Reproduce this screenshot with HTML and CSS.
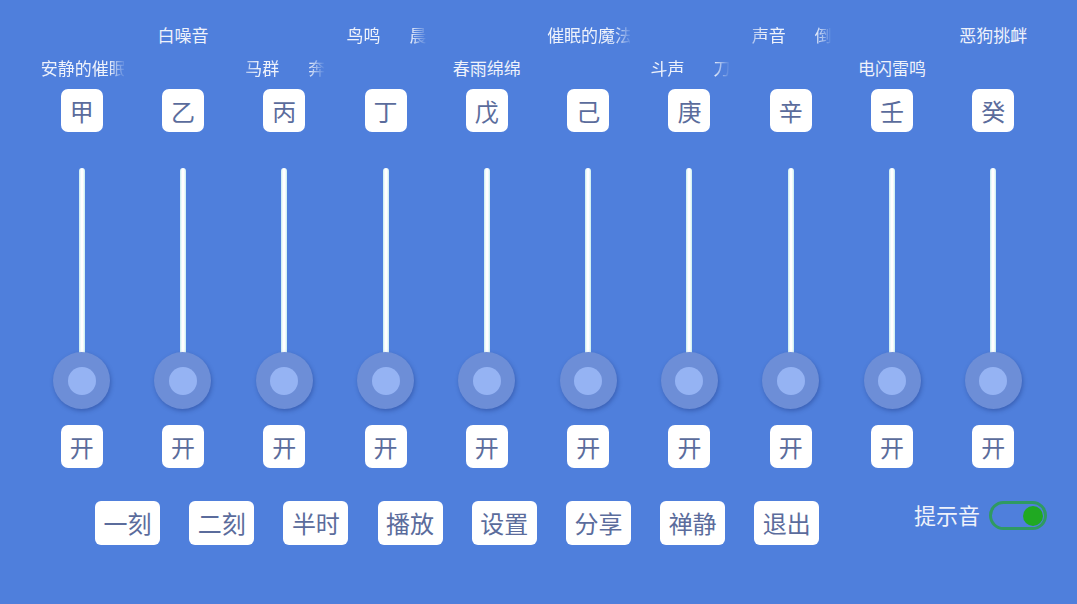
FILE: index.html
```html
<!DOCTYPE html>
<html lang="zh-CN">
<head>
	<meta charset="UTF-8">
	<title>白噪音混音台</title>
	<link rel="stylesheet" href="styles.css">
</head>
<body>
	<div class="panel">
		<div class="channel low">
			<div class="label"><span class="scroll">安静的催眠</span></div>
			<div class="key">甲</div>
			<div class="slider"><div class="track"></div><div class="knob"><i></i></div></div>
			<div class="key switch-key">开</div>
		</div>
		<div class="channel high">
			<div class="label center"><span>白噪音</span></div>
			<div class="key">乙</div>
			<div class="slider"><div class="track"></div><div class="knob"><i></i></div></div>
			<div class="key switch-key">开</div>
		</div>
		<div class="channel low">
			<div class="label"><span class="scroll fade-l">马群<b class="gap"></b>奔</span></div>
			<div class="key">丙</div>
			<div class="slider"><div class="track"></div><div class="knob"><i></i></div></div>
			<div class="key switch-key">开</div>
		</div>
		<div class="channel high">
			<div class="label"><span class="scroll shift">鸟鸣<b class="gap"></b>晨</span></div>
			<div class="key">丁</div>
			<div class="slider"><div class="track"></div><div class="knob"><i></i></div></div>
			<div class="key switch-key">开</div>
		</div>
		<div class="channel low">
			<div class="label center"><span>春雨绵绵</span></div>
			<div class="key">戊</div>
			<div class="slider"><div class="track"></div><div class="knob"><i></i></div></div>
			<div class="key switch-key">开</div>
		</div>
		<div class="channel high">
			<div class="label"><span class="scroll">催眠的魔法</span></div>
			<div class="key">己</div>
			<div class="slider"><div class="track"></div><div class="knob"><i></i></div></div>
			<div class="key switch-key">开</div>
		</div>
		<div class="channel low">
			<div class="label"><span class="scroll shift">斗声<b class="gap"></b>刀</span></div>
			<div class="key">庚</div>
			<div class="slider"><div class="track"></div><div class="knob"><i></i></div></div>
			<div class="key switch-key">开</div>
		</div>
		<div class="channel high">
			<div class="label"><span class="scroll fade-l">声音<b class="gap"></b>倒</span></div>
			<div class="key">辛</div>
			<div class="slider"><div class="track"></div><div class="knob"><i></i></div></div>
			<div class="key switch-key">开</div>
		</div>
		<div class="channel low">
			<div class="label center"><span>电闪雷鸣</span></div>
			<div class="key">壬</div>
			<div class="slider"><div class="track"></div><div class="knob"><i></i></div></div>
			<div class="key switch-key">开</div>
		</div>
		<div class="channel high">
			<div class="label center"><span>恶狗挑衅</span></div>
			<div class="key">癸</div>
			<div class="slider"><div class="track"></div><div class="knob"><i></i></div></div>
			<div class="key switch-key">开</div>
		</div>
	</div>

	<div class="toolbar">
		<button class="tool">一刻</button>
		<button class="tool">二刻</button>
		<button class="tool">半时</button>
		<button class="tool">播放</button>
		<button class="tool">设置</button>
		<button class="tool">分享</button>
		<button class="tool">禅静</button>
		<button class="tool">退出</button>
		<div class="hint">
			<span>提示音</span>
			<div class="toggle"><i></i></div>
		</div>
	</div>
</body>
</html>
```

FILE: styles.css
```css
html,body,div,span,button,b,i{
	padding: 0;
	margin: 0;
	border: 0;
}
body{
	width: 1077px;
	height: 604px;
	overflow: hidden;
	background-color: #4f7fdc;
	font-family: "Noto Sans CJK SC", "Noto Sans", sans-serif;
}
button:focus{
	outline: none;
}
.panel{
	display: flex;
	padding-left: 31px;
}
.channel{
	width: 101.3px;
	display: flex;
	flex-direction: column;
	align-items: center;
}
.label{
	width: 84px;
	height: 24px;
	overflow: hidden;
	white-space: nowrap;
	font-size: 17px;
	line-height: 24px;
	color: #eef2fb;
}
.label.center{
	text-align: center;
}
.label .scroll{
	display: inline-block;
	padding-left: 1px;
	-webkit-mask-image: linear-gradient(to right, #000 0, #000 80%, transparent 100%);
	mask-image: linear-gradient(to right, #000 0, #000 80%, transparent 100%);
}
.label .scroll.shift{
	padding-left: 3px;
}
.label .scroll.fade-l{
	padding-left: 3px;
	-webkit-mask-image: linear-gradient(to right, rgba(0,0,0,.5) 0, #000 20%, #000 80%, transparent 100%);
	mask-image: linear-gradient(to right, rgba(0,0,0,.5) 0, #000 20%, #000 80%, transparent 100%);
}
.gap{
	display: inline-block;
	width: 29px;
}
.channel.high .label{
	margin-top: 23px;
	margin-bottom: 42px;
}
.channel.low .label{
	margin-top: 56px;
	margin-bottom: 9px;
}
.key{
	width: 42px;
	height: 43px;
	display: flex;
	align-items: center;
	justify-content: center;
	background-color: #fff;
	border-radius: 7px;
	font-size: 24px;
	color: #5b6c9c;
}
.slider{
	position: relative;
	width: 57px;
	height: 241px;
	margin-top: 36px;
}
.track{
	position: absolute;
	left: 25.5px;
	top: 0;
	width: 6px;
	height: 212px;
	border-radius: 3px;
	background: linear-gradient(to right, #c4ecef 0, #fff 35%, #fff 65%, #c4ecef 100%);
}
.knob{
	position: absolute;
	left: 0;
	bottom: 0;
	width: 57px;
	height: 57px;
	display: flex;
	align-items: center;
	justify-content: center;
	border-radius: 50%;
	background-color: #6d8ed7;
	box-shadow: 1px 2px 4px rgba(20,40,110,.35);
}
.knob i{
	width: 28px;
	height: 28px;
	border-radius: 50%;
	background-color: #95b3f3;
}
.switch-key{
	margin-top: 16px;
}
.toolbar{
	display: flex;
	align-items: flex-start;
	margin-top: 33px;
	padding-left: 95px;
	padding-right: 30px;
}
.tool{
	width: 65px;
	height: 44px;
	margin-right: 29.2px;
	background-color: #fff;
	border-radius: 6px;
	font-family: "Noto Sans CJK SC", "Noto Sans", sans-serif;
	font-size: 24px;
	line-height: 44px;
	color: #5b6c9c;
}
.hint{
	display: flex;
	align-items: center;
	height: 29px;
	margin-top: 0;
	margin-left: auto;
	font-size: 22px;
	color: #eef2fb;
}
.hint span{
	position: relative;
	top: -2px;
}
.toggle{
	width: 58px;
	height: 29px;
	box-sizing: border-box;
	margin-left: 9px;
	display: flex;
	align-items: center;
	justify-content: flex-end;
	padding-right: 1px;
	border: 3px solid #2f9a62;
	border-radius: 15px;
}
.toggle i{
	width: 20px;
	height: 20px;
	border-radius: 50%;
	background-color: #20a922;
}
```
